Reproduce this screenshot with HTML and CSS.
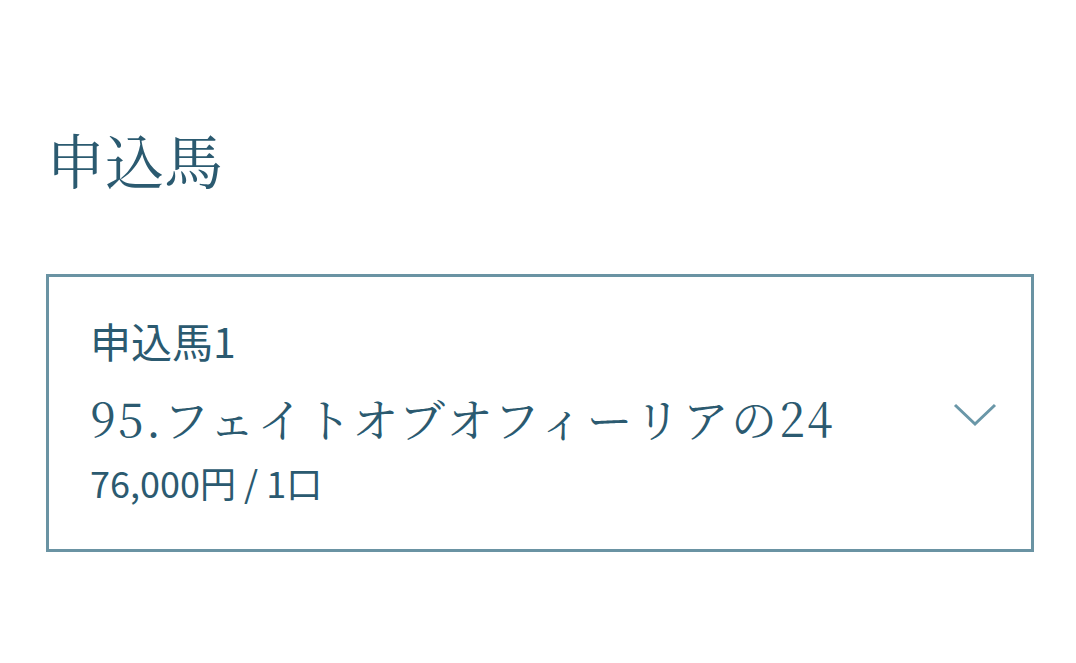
FILE: index.html
```html
<!DOCTYPE html>
<html lang="ja">
<head>
<meta charset="utf-8">
<link rel="stylesheet" href="styles.css">
</head>
<body>
<section class="page">
  <h2 class="heading">申込馬</h2>
  <div class="select-box">
    <div class="select-text">
      <div class="label">申込馬1</div>
      <div class="horse">95.フェイトオブオフィーリアの24</div>
      <div class="price">76,000円 / 1口</div>
    </div>
    <svg class="chevron" width="44" height="26" viewBox="0 0 44 26" aria-hidden="true">
      <path d="M2 3 L22 22 L42 3" fill="none" stroke="#6a97a8" stroke-width="3"/>
    </svg>
  </div>
</section>
</body>
</html>
```
FILE: styles.css
```css
html, body {
  margin: 0;
  padding: 0;
  background: #ffffff;
}
.page {
  padding: 122px 42px 0 46px;
  color: #2b5a70;
  font-family: "Noto Sans CJK JP", "Noto Sans", sans-serif;
}
.heading {
  margin: 0;
  font-family: "Noto Serif CJK JP", "Liberation Serif", "Noto Sans CJK JP", serif;
  font-weight: 400;
  font-size: 59px;
  line-height: 74px;
  color: #2b5a70;
}
.select-box {
  margin-top: 78px;
  width: 988px;
  height: 278px;
  box-sizing: border-box;
  border: 3px solid #6a93a3;
  display: flex;
  align-items: center;
  justify-content: space-between;
  padding: 0 34px 0 41px;
}
.select-text {
  display: flex;
  flex-direction: column;
  padding-bottom: 7px;
}
.label {
  font-size: 41px;
  line-height: 56px;
  font-weight: 400;
}
.horse {
  margin-top: 17px;
  font-family: "Noto Serif CJK JP", "Liberation Serif", "Noto Sans CJK JP", serif;
  font-size: 46px;
  line-height: 64px;
  letter-spacing: 2.2px;
}
.price {
  margin-top: 8px;
  font-size: 36px;
  line-height: 50px;
}
.chevron {
  flex: none;
  margin-top: 4px;
}
```
